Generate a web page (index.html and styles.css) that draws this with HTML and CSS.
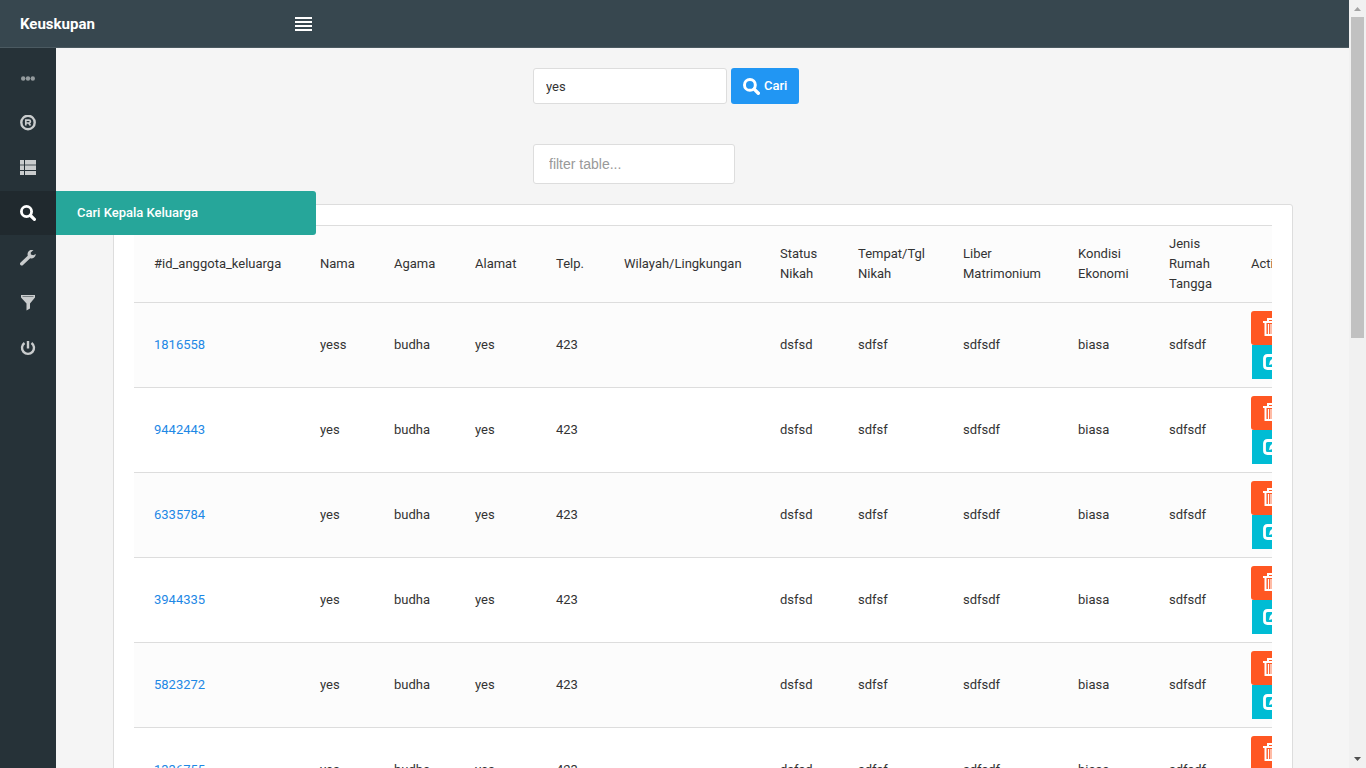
FILE: index.html
```html
<!DOCTYPE html>
<html lang="id">
<head>
<meta charset="utf-8">
<title>Keuskupan</title>
<link rel="stylesheet" href="styles.css">
</head>
<body>
<svg class="sprite" aria-hidden="true">
  <symbol id="i-search" viewBox="0 0 16 16"><circle cx="6.5" cy="6.5" r="5.100" fill="none" stroke="currentColor" stroke-width="2.800"/><path d="M10.500 10.500l3.900 3.900" stroke="currentColor" stroke-width="3.200" stroke-linecap="round"/></symbol>
  <symbol id="i-trash" viewBox="0 0 16 18"><path d="M5 3V1h6v2M0 4h16" fill="none" stroke="currentColor" stroke-width="2"/><path d="M2.500 5v12h11V5" fill="none" stroke="currentColor" stroke-width="2"/><path d="M5.500 6v10M8 6v10M10.500 6v10" fill="none" stroke="currentColor" stroke-width="1.200"/></symbol>
  <symbol id="i-edit" viewBox="0 0 16 16"><path d="M11 1.500H4.500Q1.500 1.500 1.500 4.500v7q0 3 3 3h6q3 0 3-3V9" fill="none" stroke="currentColor" stroke-width="2.800"/><path d="M6 11l1-4 6-6 3 3-6 6z" fill="currentColor"/></symbol>
</svg>
<div class="window">
  <div class="page">
    <header class="navbar">
      <a class="brand" href="#">Keuskupan</a>
      <button class="toggle" type="button" aria-label="Menu"><svg width="17" height="14" viewBox="0 0 17 14"><path d="M0 1h17M0 5h17M0 9h17M0 13h17" stroke="currentColor" stroke-width="2"/></svg></button>
    </header>
    <div class="body">
      <nav class="sidebar">
        <span class="side-item side-header"><svg width="16" height="16" viewBox="0 0 16 16" fill="currentColor"><circle cx="3.200" cy="8.500" r="2.200"/><circle cx="8" cy="8.500" r="2.200"/><circle cx="12.800" cy="8.500" r="2.200"/></svg></span>
        <a class="side-item" href="#" aria-label="Registrasi"><svg width="16" height="16" viewBox="0 0 16 16" fill="none" stroke="currentColor"><circle cx="8" cy="7.500" r="6.700" stroke-width="2.400"/><path d="M5.800 10.500V5.200H9a1.400 1.400 0 0 1 0 2.800H5.800M8.500 8L10.500 10.500" stroke-width="1.700"/></svg></a>
        <a class="side-item" href="#" aria-label="Daftar"><svg width="16" height="16" viewBox="0 0 16 16" fill="currentColor"><path d="M0 0h4v4H0zM5 0h11v4H5zM0 6h4v4H0zM5 6h11v4H5zM0 11h4v4H0zM5 11h11v4H5z"/><path d="M0 4h4v2H0zM5 4h11v2H5z" opacity=".6"/></svg></a>
        <a class="side-item active" href="#"><svg width="16" height="16"><use href="#i-search"/></svg><span class="side-label">Cari Kepala Keluarga</span></a>
        <a class="side-item" href="#" aria-label="Pengaturan"><svg width="16" height="16" viewBox="0 0 16 16"><path d="M1.800 13.700L9.500 6.500" stroke="currentColor" stroke-width="3.600" stroke-linecap="round"/><path d="M13.500 0A4.500 4.500 0 0 0 7.800 5.700l2.500 2.600a4.500 4.500 0 0 0 5.500-4.200l-2.500 1.200-2.400-.7-.2-2.200z" fill="currentColor"/></svg></a>
        <a class="side-item" href="#" aria-label="Filter"><svg width="16" height="16" viewBox="0 0 16 16" fill="currentColor"><path d="M1 0h14v2.500L10 8.500v5L6.500 15.500v-7L1 2.500z"/><path d="M2.500 1.500h11" stroke="#263238" stroke-width="1" opacity=".5"/></svg></a>
        <a class="side-item" href="#" aria-label="Keluar"><svg width="16" height="16" viewBox="0 0 16 16" fill="none" stroke="currentColor" stroke-width="2.400"><path d="M4.500 3a6 6 0 1 0 7 0M8 1v7.500"/></svg></a>
      </nav>
      <main class="content">
        <div class="forms">
          <form class="search">
            <input class="field" type="text" value="yes" aria-label="Cari">
            <button class="btn-search" type="button"><svg width="17" height="17"><use href="#i-search"/></svg>Cari</button>
          </form>
          <input class="field filter" type="text" placeholder="filter table..." aria-label="Filter table">
        </div>
        <section class="panel">
          <div class="table-wrap">
            <table>
              <colgroup><col class="c-id"><col class="c-nama"><col class="c-mid"><col class="c-mid"><col class="c-telp"><col class="c-wil"><col class="c-status"><col class="c-tempat"><col class="c-liber"><col class="c-kondisi"><col class="c-jenis"><col class="c-action"></colgroup>
              <thead><tr><th>#id_anggota_keluarga</th><th>Nama</th><th>Agama</th><th>Alamat</th><th>Telp.</th><th>Wilayah/Lingkungan</th><th>Status Nikah</th><th>Tempat/Tgl Nikah</th><th>Liber Matrimonium</th><th>Kondisi Ekonomi</th><th>Jenis Rumah Tangga</th><th>Action</th></tr></thead>
              <tbody>
                <tr><td><a href="#">1816558</a></td><td>yess</td><td>budha</td><td>yes</td><td>423</td><td></td><td>dsfsd</td><td>sdfsf</td><td>sdfsdf</td><td>biasa</td><td>sdfsdf</td><td><button class="act del" type="button" aria-label="Hapus"><svg width="16" height="18"><use href="#i-trash"/></svg></button><button class="act edit" type="button" aria-label="Ubah"><svg width="16" height="16"><use href="#i-edit"/></svg></button></td></tr>
                <tr><td><a href="#">9442443</a></td><td>yes</td><td>budha</td><td>yes</td><td>423</td><td></td><td>dsfsd</td><td>sdfsf</td><td>sdfsdf</td><td>biasa</td><td>sdfsdf</td><td><button class="act del" type="button" aria-label="Hapus"><svg width="16" height="18"><use href="#i-trash"/></svg></button><button class="act edit" type="button" aria-label="Ubah"><svg width="16" height="16"><use href="#i-edit"/></svg></button></td></tr>
                <tr><td><a href="#">6335784</a></td><td>yes</td><td>budha</td><td>yes</td><td>423</td><td></td><td>dsfsd</td><td>sdfsf</td><td>sdfsdf</td><td>biasa</td><td>sdfsdf</td><td><button class="act del" type="button" aria-label="Hapus"><svg width="16" height="18"><use href="#i-trash"/></svg></button><button class="act edit" type="button" aria-label="Ubah"><svg width="16" height="16"><use href="#i-edit"/></svg></button></td></tr>
                <tr><td><a href="#">3944335</a></td><td>yes</td><td>budha</td><td>yes</td><td>423</td><td></td><td>dsfsd</td><td>sdfsf</td><td>sdfsdf</td><td>biasa</td><td>sdfsdf</td><td><button class="act del" type="button" aria-label="Hapus"><svg width="16" height="18"><use href="#i-trash"/></svg></button><button class="act edit" type="button" aria-label="Ubah"><svg width="16" height="16"><use href="#i-edit"/></svg></button></td></tr>
                <tr><td><a href="#">5823272</a></td><td>yes</td><td>budha</td><td>yes</td><td>423</td><td></td><td>dsfsd</td><td>sdfsf</td><td>sdfsdf</td><td>biasa</td><td>sdfsdf</td><td><button class="act del" type="button" aria-label="Hapus"><svg width="16" height="18"><use href="#i-trash"/></svg></button><button class="act edit" type="button" aria-label="Ubah"><svg width="16" height="16"><use href="#i-edit"/></svg></button></td></tr>
                <tr><td><a href="#">1336755</a></td><td>yes</td><td>budha</td><td>yes</td><td>423</td><td></td><td>dsfsd</td><td>sdfsf</td><td>sdfsdf</td><td>biasa</td><td>sdfsdf</td><td><button class="act del" type="button" aria-label="Hapus"><svg width="16" height="18"><use href="#i-trash"/></svg></button><button class="act edit" type="button" aria-label="Ubah"><svg width="16" height="16"><use href="#i-edit"/></svg></button></td></tr>
              </tbody>
            </table>
          </div>
        </section>
      </main>
    </div>
  </div>
  <div class="scrollbar" aria-hidden="true">
    <svg class="arrow" width="17" height="17" viewBox="0 0 17 17"><path d="M5 11l3.500-4 3.500 4z" fill="#a3a3a3"/></svg>
    <div class="track"><div class="thumb"></div></div>
    <svg class="arrow" width="17" height="17" viewBox="0 0 17 17"><path d="M5 6l3.500 4L12 6z" fill="#505050"/></svg>
  </div>
</div>
</body>
</html>
```

FILE: styles.css
```css
* { box-sizing: border-box; }
body { margin: 0; background: #f5f5f5; color: #333; font: 13px/20px Roboto, "Liberation Sans", sans-serif; }
button, input { font: inherit; }
a { color: #1e88e5; text-decoration: none; }
svg { display: block; flex: none; }
.sprite { position: absolute; width: 0; height: 0; }

.window { display: flex; height: 100vh; overflow: hidden; }
.page { flex: 1; min-width: 0; display: flex; flex-direction: column; }
.navbar { flex: none; display: flex; align-items: center; height: 48px; background: #37474f; border-bottom: 1px solid #4b5a61; }
.brand { width: 275px; padding: 0 20px; color: #fff; font-size: 15px; font-weight: 700; }
.toggle { padding: 0 20px; border: 0; background: none; color: #fff; }

.body { flex: 1; min-height: 0; display: flex; }
.sidebar { position: relative; z-index: 1; flex: none; display: flex; flex-direction: column; gap: 1px; width: 56px; padding-top: 8px; background: #263238; }
.side-item { position: relative; display: flex; align-items: center; justify-content: center; height: 44px; color: #c9cccd; }
.side-header { color: #939a9d; }
.side-item.active { background: #20292e; color: #fff; }
.side-label { position: absolute; top: 0; left: 100%; width: 260px; padding: 12px 21px; background: #26a69a; border-radius: 0 3px 3px 0; font-weight: 500; }

.content { flex: 1; min-width: 0; padding: 20px 56px 0 57px; overflow: hidden; }
.forms { display: grid; grid-template-columns: 21fr 38fr; gap: 40px 0; padding-bottom: 20px; }
.forms > * { grid-column: 2; }
.search { display: flex; gap: 4px; }
.field { width: 194px; height: 36px; padding: 0 12px; border: 1px solid #ddd; border-radius: 3px; background: #fff; color: #333; }
.field::placeholder { color: #999; opacity: 1; }
.filter { width: 202px; height: 40px; padding: 0 15px; font-family: "Liberation Sans", Arial, sans-serif; font-size: 14px; }
.btn-search { display: flex; align-items: center; gap: 4px; height: 36px; padding: 0 12px; border: 0; border-radius: 3px; background: #2196f3; color: #fff; font-weight: 500; }

.panel { padding: 20px; background: #fff; border: 1px solid #ddd; border-radius: 3px; }
.table-wrap { overflow: hidden; }
table { width: 1180px; table-layout: fixed; border-collapse: separate; border-spacing: 0; }
th, td { padding: 8px 20px; border-top: 1px solid #ddd; text-align: left; vertical-align: middle; font-weight: 400; }
thead tr, tbody tr:nth-child(odd) { background: #fcfcfc; }
.c-id { width: 166px; }
.c-nama { width: 74px; }
.c-mid { width: 81px; }
.c-telp { width: 68px; }
.c-wil { width: 156px; }
.c-status { width: 78px; }
.c-tempat { width: 105px; }
.c-liber { width: 115px; }
.c-kondisi { width: 91px; }
.c-jenis { width: 82px; }
.c-action { width: 83px; }
.act { display: flex; align-items: center; height: 34px; padding: 0 12px; border: 0; color: #fff; }
.del { padding-bottom: 2px; background: #ff5722; border-radius: 3px 0 0 3px; }
.edit { margin-left: 1px; padding-left: 11px; background: #00bcd4; }

.scrollbar { flex: none; display: flex; flex-direction: column; width: 17px; background: #f1f1f1; }
.track { flex: 1; padding: 0 2px; }
.thumb { height: 321px; background: #c1c1c1; }
```
